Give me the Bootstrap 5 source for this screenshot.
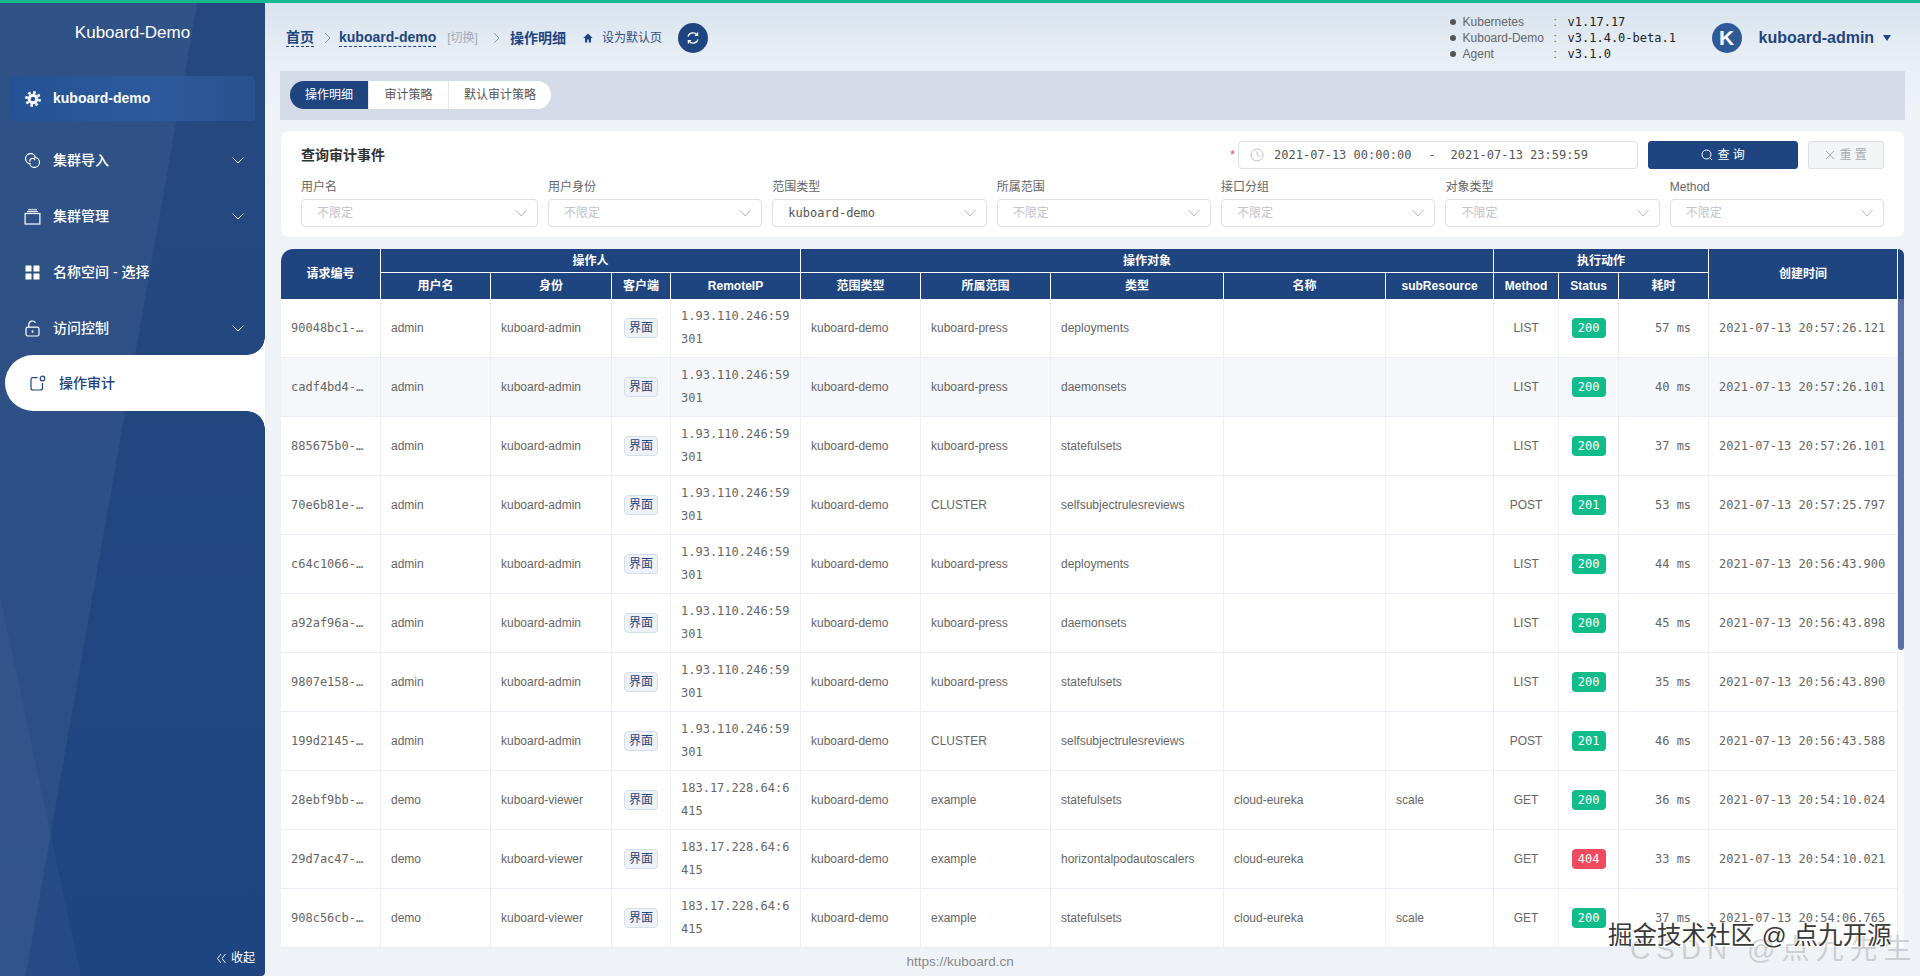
<!DOCTYPE html>
<html lang="zh-CN">
<head>
<meta charset="utf-8">
<title>Kuboard 操作审计</title>
<link rel="stylesheet" href="https://cdn.jsdelivr.net/npm/bootstrap@5.3.0/dist/css/bootstrap.min.css">
<style>
:root{--navy:#1f4580;--sans:"Liberation Sans","Noto Sans CJK SC",sans-serif;--mono:"DejaVu Sans Mono","Noto Sans CJK SC",monospace}
html,body{height:976px;overflow:hidden}
body{font-family:var(--sans);font-size:12px;color:#666;background:#eff3f8;border-top:3px solid #14b98e;position:relative}
.shell{height:973px}
/* sidebar */
.side{width:265px;flex:none;color:#fff;border-radius:0 0 4px 0;
 background:linear-gradient(78deg,rgba(255,255,255,.03) 0 17%,transparent 17.2%),linear-gradient(100deg,rgba(255,255,255,.05) 0 45%,transparent 45.3%),linear-gradient(180deg,#25497f,#1f4580)}
.side-title{height:73px;font-size:17px;line-height:60px;text-align:center}
.side-current{height:45px;margin:0 10px 11px;padding-left:14px;border-radius:4px;color:#fff;font-size:14px;font-weight:700;
 background:linear-gradient(90deg,#245295,#2d5a9c 60%,#28528f)}
.side-current .lbl{margin-left:3px}
.side .nav-link{height:56px;padding:0 20px 0 24px;color:#fff;font-size:14px;font-weight:500;gap:12px}
.side .nav-link .chev{margin-left:auto}
.side .nav-link.on{margin:-1px 0 0 5px;padding-left:25px;gap:13px;background:#fff;color:var(--navy);border-radius:28px 0 0 28px;position:relative}
.side .nav-link.on::before,.side .nav-link.on::after{content:"";position:absolute;right:0;width:18px;height:18px}
.side .nav-link.on::before{top:-18px;background:radial-gradient(circle at 0 0,transparent 17.5px,#fff 18px)}
.side .nav-link.on::after{bottom:-18px;background:radial-gradient(circle at 0 100%,transparent 17.5px,#fff 18px)}
.side-fold{padding:0 10px 9px 0;font-size:12px;gap:4px;color:#fff}
/* main */
.work{padding:0 16px;background:linear-gradient(180deg,#d8e3ed 0,#e9eff6 60px,#eff3f8 110px)}
.topbar{height:68px;padding-top:2px}
.crumb{margin-left:5px;color:var(--navy);font-size:14px;font-weight:700}
.crumb a{color:var(--navy);text-decoration:none;border-bottom:1px dashed var(--navy);line-height:16px;padding-bottom:1px}
.crumb .sep{margin:0 8px 0 10px}
.crumb .swap{font-size:12px;font-weight:400;color:#a3abb8;margin-left:11px;margin-right:7px}
.crumb .sep2{margin:0 10px 0 8px}
.crumb .sethome{font-size:12px;font-weight:400;margin-left:17px;gap:9px;color:#33507f}
.roundbtn{width:30px;height:30px;border-radius:50%;background:var(--navy);margin-left:16px;padding:0;border:0}
.vers{margin-right:36px;line-height:16px}
.vers li{display:flex;align-items:center}
.vers .dot{width:6px;height:6px;border-radius:50%;background:#555;margin-right:7px}
.vers .k{width:91px}
.vers .c{width:14px}
.vers .v{font-family:var(--mono);color:#222;width:108px;white-space:nowrap;font-size:12px}
.ava{width:30px;height:30px;border-radius:50%;background:#2f5a97;color:#fff;font-size:21px;font-weight:700;line-height:30px;text-align:center}
.who{color:var(--navy);font-size:16px;font-weight:700;margin-left:17px}
.drop{margin:0 13px 0 9px;width:0;height:0;border:4.5px solid transparent;border-top:6px solid var(--navy);border-bottom:0}
.tabband{height:49px;margin:0 -1px 11px;padding:10px 10px;background:#d3dbe6}
.tabband .btn{height:28px;width:80px;padding:0;font-size:12px;line-height:28px;background:#fff;color:#555;border:0;border-right:1px solid #e4e7ed;border-radius:0}
.tabband .btn-group>.btn.btn.btn{margin-left:0}
.tabband .btn.on{width:79px;background:var(--navy);color:#fff;border-radius:14px 0 0 14px}
.tabband .btn.end{width:102px;border-right:0;border-radius:0 14px 14px 0}
.qcard{height:106px;padding:10px 20px;border:0;border-radius:8px;background:#fff}
.qtitle{font-size:14px;font-weight:700;color:#333}
.req{color:#e4566b;font-size:13px;margin-right:3px}
.range{width:400px;height:28px;border:1px solid #dcdfe6;border-radius:4px;padding:0 0 0 11px;font-family:var(--mono);font-size:12px;color:#555;background:#fff;white-space:pre}
.range svg{margin-right:10px}
.range .dash{margin:0 15px 0 17px}
.go{width:150px;height:28px;margin-left:10px;padding:0;font-size:12px;background:var(--navy);border:1px solid var(--navy);color:#fff;border-radius:3px}
.clr{width:76px;height:28px;margin-left:10px;padding:0;font-size:12px;background:#f3f4f5;border:1px solid #dcdfe6;color:#a8abb2;border-radius:3px}
.flt-row{gap:10px}
.flt{flex:1 1 0;min-width:0}
.flt.wide{flex:0 0 237px}
.flt label{display:block;height:18px;line-height:18px;margin:9px 0 3px;color:#666;font-size:12px}
.flt .form-select{height:28px;padding:0 28px 0 15px;font-size:12px;color:#c0c4cc;border-color:#dcdfe6;border-radius:4px;background-size:14px 10px;background-position:right 9px center;
 background-image:url("data:image/svg+xml,%3csvg xmlns='http://www.w3.org/2000/svg' viewBox='0 0 14 10'%3e%3cpath fill='none' stroke='%23b4b8c0' d='M1.5 2l5.5 6 5.500-6'/%3e%3c/svg%3e")}
.flt .form-select.set{color:#555;font-family:var(--mono)}
.grid-wrap{margin-top:12px;height:699px;border-radius:12px 6px 0 0;overflow:hidden;background:#fff}
.audit-grid{table-layout:fixed;width:1617px;flex:none;margin:0;border-collapse:separate;border-spacing:0;font-size:12px;color:#666}
.audit-grid>:not(caption)>*>*{padding:0 10px;vertical-align:middle;border:0;border-right:1px solid #ebeef5;border-bottom:1px solid #ebeef5;height:59px;box-shadow:none;background:#fff;color:#666}
.audit-grid>thead>*>*{background:var(--navy);color:#fff;font-weight:700;text-align:center;border-right:1px solid #fff;border-bottom:0;padding:0 4px}
.audit-grid>thead>tr.r1>*{height:24px}
.audit-grid>thead>tr.r1>.under{border-bottom:1px solid #fff}
.audit-grid>thead>tr.r2>*{height:26px}
.audit-grid>tbody>tr.hov>*{background:#f5f7fa}
.audit-grid .rid{font-family:var(--mono);white-space:nowrap}
.audit-grid .ip{font-family:var(--mono);word-break:break-all;line-height:23px}
.audit-grid .mid{text-align:center;padding:0}
.audit-grid .ms{font-family:var(--mono);text-align:right;padding-right:17px}
.audit-grid .ts{font-family:var(--mono);white-space:nowrap;padding-left:10px;padding-right:0}
.chip{padding:0 4px;height:20px;line-height:18px;font-size:12px;font-weight:400;color:var(--navy);background:#eef2f8;border:1px solid #d5deec;border-radius:4px}
.stat{width:34px;height:20px;padding:0;line-height:20px;font-family:var(--mono);font-size:12px;font-weight:400;color:#fff;border-radius:4px;background:#10bd8a}
.stat.bad{background:#f04a5f}
.rail{width:6px;flex:none;background:#f8fafc}
.rail-cap{height:50px;background:var(--navy)}
.rail-thumb{height:351px;background:#5a70a5;border-radius:0 0 3px 3px}
.foot{height:28px;line-height:28px;padding-right:265px;text-align:center;color:#888;font-size:13.5px}
.mark1,.mark2{position:absolute;white-space:nowrap;pointer-events:none}
.mark2{left:1630px;top:929px;font-size:28px;line-height:36px;color:rgba(175,175,175,.55);letter-spacing:6px}
.mark1{left:1608px;top:917px;font-size:24.5px;line-height:32px;color:#3a3a3a;text-shadow:1px 1px 0 #fff,-1px 0 0 rgba(255,255,255,.7)}
</style>
</head>
<body>
<div class="shell d-flex">
 <aside class="side d-flex flex-column">
  <div class="side-title">Kuboard-Demo</div>
  <div class="side-current d-flex align-items-center gap-2">
   <svg width="18" height="18" viewBox="0 0 18 18" fill="none" stroke="#fff"><circle cx="9" cy="9" r="3.8" stroke-width="3"/><circle cx="9" cy="9" r="6.6" stroke-width="2.6" stroke-dasharray="2.6 2.58"/></svg>
   <span class="lbl">kuboard-demo</span>
  </div>
  <nav class="nav flex-column">
   <a class="nav-link d-flex align-items-center" href="#">
    <svg width="17" height="17" viewBox="0 0 17 17" fill="none" stroke="#fff" stroke-width="1.2"><path d="M6.6 11.6A5 5 0 1 1 11.5 6"/><path d="M10.4 5.4a5 5 0 1 1-4.9 5.6"/><path d="M6 9.6a2.6 2.6 0 0 1 5-1.4"/></svg>
    集群导入
    <svg class="chev" width="14" height="10" viewBox="0 0 14 10" fill="none" stroke="#fff"><path d="M1.5 2.5L7 8l5.500-5.500"/></svg>
   </a>
   <a class="nav-link d-flex align-items-center" href="#">
    <svg width="17" height="17" viewBox="0 0 17 17" fill="none" stroke="#fff" stroke-width="1.2"><rect x="1.100" y="5.500" width="14.800" height="10.500"/><path d="M3 3.600h11" stroke-width="1.100"/><path d="M4 1.600h9" stroke-width="1.500" opacity=".7"/></svg>
    集群管理
    <svg class="chev" width="14" height="10" viewBox="0 0 14 10" fill="none" stroke="#fff"><path d="M1.5 2.5L7 8l5.500-5.500"/></svg>
   </a>
   <a class="nav-link d-flex align-items-center" href="#">
    <svg width="17" height="17" viewBox="0 0 17 17" fill="#fff"><rect x="1.500" y="1.500" width="6" height="6" rx=".6"/><rect x="9.500" y="1.500" width="6" height="6" rx=".6"/><rect x="1.500" y="9.500" width="6" height="6" rx=".6"/><rect x="9.500" y="9.500" width="6" height="6" rx=".6"/></svg>
    名称空间 - 选择
   </a>
   <a class="nav-link d-flex align-items-center" href="#">
    <svg width="17" height="17" viewBox="0 0 17 17" fill="none" stroke="#fff" stroke-width="1.200"><rect x="2" y="7.200" width="13" height="8.800" rx="1.800"/><path d="M4.800 7V4.600a3.600 3.600 0 0 1 6.700-1.800"/><path d="M8.500 10.500v2.200" stroke-width="1.600"/></svg>
    访问控制
    <svg class="chev" width="14" height="10" viewBox="0 0 14 10" fill="none" stroke="#fff"><path d="M1.5 2.5L7 8l5.500-5.500"/></svg>
   </a>
   <a class="nav-link on d-flex align-items-center" href="#">
    <svg width="16" height="16" viewBox="0 0 16 16" fill="none" stroke="#1f4580" stroke-width="1.200"><path d="M7.500 2.600H3a2 2 0 0 0-2 2V13a2 2 0 0 0 2 2h7.500a2 2 0 0 0 2-2V8"/><circle cx="12.500" cy="3.500" r="2.300"/></svg>
    操作审计
   </a>
  </nav>
  <div class="side-fold mt-auto d-flex justify-content-end align-items-center">
   <svg width="11" height="11" viewBox="0 0 11 11" fill="none" stroke="#fff" stroke-width=".9"><path d="M5 1L1.500 5.500 5 10M9.500 1L6 5.500 9.500 10"/></svg>
   <span>收起</span>
  </div>
 </aside>

 <main class="work flex-grow-1 d-flex flex-column">
  <header class="topbar d-flex align-items-center justify-content-between">
   <div class="crumb d-flex align-items-center">
    <a href="#">首页</a>
    <svg class="sep" width="7" height="12" viewBox="0 0 7 12" fill="none" stroke="#8a97ab"><path d="M1 1l5 5-5 5"/></svg>
    <a href="#">kuboard-demo</a>
    <span class="swap">[切换]</span>
    <svg class="sep2" width="7" height="12" viewBox="0 0 7 12" fill="none" stroke="#8a97ab"><path d="M1 1l5 5-5 5"/></svg>
    <span>操作明细</span>
    <span class="sethome d-flex align-items-center">
     <svg width="10" height="10" viewBox="0 0 10 10" fill="#1f4580"><path d="M5 .5L.3 5H2v4.500h2.200V6.500h1.600v3H8V5h1.700z"/></svg>
     设为默认页
    </span>
    <button class="roundbtn btn d-flex align-items-center justify-content-center" type="button" aria-label="刷新">
     <svg width="14" height="14" viewBox="0 0 14 14" fill="none" stroke="#fff" stroke-width="1.300"><path d="M2 5.500A5.200 5.200 0 0 1 11.200 4M12 8.500A5.200 5.200 0 0 1 2.800 10"/><path d="M11.600 1.500V4.400H8.900M2.400 12.500V9.600H5.100"/></svg>
    </button>
   </div>
   <div class="d-flex align-items-center">
    <ul class="vers list-unstyled mb-0">
     <li><span class="dot"></span><span class="k">Kubernetes</span><span class="c">:</span><span class="v">v1.17.17</span></li>
     <li><span class="dot"></span><span class="k">Kuboard-Demo</span><span class="c">:</span><span class="v">v3.1.4.0-beta.1</span></li>
     <li><span class="dot"></span><span class="k">Agent</span><span class="c">:</span><span class="v">v3.1.0</span></li>
    </ul>
    <div class="ava">K</div>
    <span class="who">kuboard-admin</span>
    <span class="drop"></span>
   </div>
  </header>

  <div class="tabband">
   <div class="btn-group" role="group">
    <button class="btn on" type="button">操作明细</button>
    <button class="btn" type="button">审计策略</button>
    <button class="btn end" type="button">默认审计策略</button>
   </div>
  </div>

  <section class="qcard card">
   <div class="d-flex align-items-center">
    <div class="qtitle me-auto">查询审计事件</div>
    <span class="req">*</span>
    <div class="range d-flex align-items-center">
     <svg width="14" height="14" viewBox="0 0 14 14" fill="none" stroke="#bcc0c8"><circle cx="7" cy="7" r="6"/><path d="M7 3.500V7l2.500 1.500"/></svg>
     <span>2021-07-13 00:00:00</span><span class="dash">-</span><span>2021-07-13 23:59:59</span>
    </div>
    <button class="go btn d-flex align-items-center justify-content-center gap-1" type="button">
     <svg width="12" height="12" viewBox="0 0 12 12" fill="none" stroke="#fff"><circle cx="5.500" cy="5.500" r="4.500"/><path d="M9 9l2 2"/></svg>查 询
    </button>
    <button class="clr btn d-flex align-items-center justify-content-center gap-1" type="button">
     <svg width="10" height="10" viewBox="0 0 10 10" fill="none" stroke="#a8abb2"><path d="M1 1l8 8M9 1l-8 8"/></svg>重 置
    </button>
   </div>
   <div class="d-flex flt-row">
    <div class="flt wide"><label>用户名</label><select class="form-select"><option>不限定</option></select></div>
    <div class="flt"><label>用户身份</label><select class="form-select"><option>不限定</option></select></div>
    <div class="flt"><label>范围类型</label><select class="form-select set"><option>kuboard-demo</option></select></div>
    <div class="flt"><label>所属范围</label><select class="form-select"><option>不限定</option></select></div>
    <div class="flt"><label>接口分组</label><select class="form-select"><option>不限定</option></select></div>
    <div class="flt"><label>对象类型</label><select class="form-select"><option>不限定</option></select></div>
    <div class="flt"><label>Method</label><select class="form-select"><option>不限定</option></select></div>
   </div>
  </section>

  <div class="grid-wrap d-flex">
   <table class="table audit-grid">
    <colgroup><col style="width:100px"><col style="width:110px"><col style="width:121px"><col style="width:59px"><col style="width:130px"><col style="width:120px"><col style="width:130px"><col style="width:173px"><col style="width:162px"><col style="width:108px"><col style="width:65px"><col style="width:60px"><col style="width:90px"><col style="width:189px"></colgroup>
    <thead>
     <tr class="r1"><th rowspan="2">请求编号</th><th colspan="4" class="under">操作人</th><th colspan="5" class="under">操作对象</th><th colspan="3" class="under">执行动作</th><th rowspan="2">创建时间</th></tr>
     <tr class="r2"><th>用户名</th><th>身份</th><th>客户端</th><th>RemoteIP</th><th>范围类型</th><th>所属范围</th><th>类型</th><th>名称</th><th>subResource</th><th>Method</th><th>Status</th><th>耗时</th></tr>
    </thead>
    <tbody>
     <tr><td class="rid">90048bc1-…</td><td>admin</td><td>kuboard-admin</td><td class="mid"><span class="badge chip">界面</span></td><td class="ip">1.93.110.246:59301</td><td>kuboard-demo</td><td>kuboard-press</td><td>deployments</td><td></td><td></td><td class="mid">LIST</td><td class="mid"><span class="badge stat">200</span></td><td class="ms">57 ms</td><td class="ts">2021-07-13 20:57:26.121</td></tr>
     <tr class="hov"><td class="rid">cadf4bd4-…</td><td>admin</td><td>kuboard-admin</td><td class="mid"><span class="badge chip">界面</span></td><td class="ip">1.93.110.246:59301</td><td>kuboard-demo</td><td>kuboard-press</td><td>daemonsets</td><td></td><td></td><td class="mid">LIST</td><td class="mid"><span class="badge stat">200</span></td><td class="ms">40 ms</td><td class="ts">2021-07-13 20:57:26.101</td></tr>
     <tr><td class="rid">885675b0-…</td><td>admin</td><td>kuboard-admin</td><td class="mid"><span class="badge chip">界面</span></td><td class="ip">1.93.110.246:59301</td><td>kuboard-demo</td><td>kuboard-press</td><td>statefulsets</td><td></td><td></td><td class="mid">LIST</td><td class="mid"><span class="badge stat">200</span></td><td class="ms">37 ms</td><td class="ts">2021-07-13 20:57:26.101</td></tr>
     <tr><td class="rid">70e6b81e-…</td><td>admin</td><td>kuboard-admin</td><td class="mid"><span class="badge chip">界面</span></td><td class="ip">1.93.110.246:59301</td><td>kuboard-demo</td><td>CLUSTER</td><td>selfsubjectrulesreviews</td><td></td><td></td><td class="mid">POST</td><td class="mid"><span class="badge stat">201</span></td><td class="ms">53 ms</td><td class="ts">2021-07-13 20:57:25.797</td></tr>
     <tr><td class="rid">c64c1066-…</td><td>admin</td><td>kuboard-admin</td><td class="mid"><span class="badge chip">界面</span></td><td class="ip">1.93.110.246:59301</td><td>kuboard-demo</td><td>kuboard-press</td><td>deployments</td><td></td><td></td><td class="mid">LIST</td><td class="mid"><span class="badge stat">200</span></td><td class="ms">44 ms</td><td class="ts">2021-07-13 20:56:43.900</td></tr>
     <tr><td class="rid">a92af96a-…</td><td>admin</td><td>kuboard-admin</td><td class="mid"><span class="badge chip">界面</span></td><td class="ip">1.93.110.246:59301</td><td>kuboard-demo</td><td>kuboard-press</td><td>daemonsets</td><td></td><td></td><td class="mid">LIST</td><td class="mid"><span class="badge stat">200</span></td><td class="ms">45 ms</td><td class="ts">2021-07-13 20:56:43.898</td></tr>
     <tr><td class="rid">9807e158-…</td><td>admin</td><td>kuboard-admin</td><td class="mid"><span class="badge chip">界面</span></td><td class="ip">1.93.110.246:59301</td><td>kuboard-demo</td><td>kuboard-press</td><td>statefulsets</td><td></td><td></td><td class="mid">LIST</td><td class="mid"><span class="badge stat">200</span></td><td class="ms">35 ms</td><td class="ts">2021-07-13 20:56:43.890</td></tr>
     <tr><td class="rid">199d2145-…</td><td>admin</td><td>kuboard-admin</td><td class="mid"><span class="badge chip">界面</span></td><td class="ip">1.93.110.246:59301</td><td>kuboard-demo</td><td>CLUSTER</td><td>selfsubjectrulesreviews</td><td></td><td></td><td class="mid">POST</td><td class="mid"><span class="badge stat">201</span></td><td class="ms">46 ms</td><td class="ts">2021-07-13 20:56:43.588</td></tr>
     <tr><td class="rid">28ebf9bb-…</td><td>demo</td><td>kuboard-viewer</td><td class="mid"><span class="badge chip">界面</span></td><td class="ip">183.17.228.64:6415</td><td>kuboard-demo</td><td>example</td><td>statefulsets</td><td>cloud-eureka</td><td>scale</td><td class="mid">GET</td><td class="mid"><span class="badge stat">200</span></td><td class="ms">36 ms</td><td class="ts">2021-07-13 20:54:10.024</td></tr>
     <tr><td class="rid">29d7ac47-…</td><td>demo</td><td>kuboard-viewer</td><td class="mid"><span class="badge chip">界面</span></td><td class="ip">183.17.228.64:6415</td><td>kuboard-demo</td><td>example</td><td>horizontalpodautoscalers</td><td>cloud-eureka</td><td></td><td class="mid">GET</td><td class="mid"><span class="badge stat bad">404</span></td><td class="ms">33 ms</td><td class="ts">2021-07-13 20:54:10.021</td></tr>
     <tr><td class="rid">908c56cb-…</td><td>demo</td><td>kuboard-viewer</td><td class="mid"><span class="badge chip">界面</span></td><td class="ip">183.17.228.64:6415</td><td>kuboard-demo</td><td>example</td><td>statefulsets</td><td>cloud-eureka</td><td>scale</td><td class="mid">GET</td><td class="mid"><span class="badge stat">200</span></td><td class="ms">37 ms</td><td class="ts">2021-07-13 20:54:06.765</td></tr>
    </tbody>
   </table>
   <div class="rail"><div class="rail-cap"></div><div class="rail-thumb"></div></div>
  </div>
  <footer class="foot">https://kuboard.cn</footer>
 </main>
</div>
<div class="mark2">CSDN @点九先生</div>
<div class="mark1">掘金技术社区 @ 点九开源</div>
</body>
</html>
